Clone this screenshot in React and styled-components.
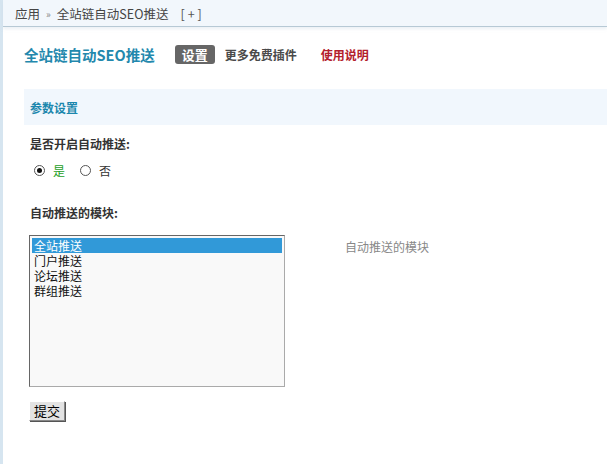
import React from 'react'
import styled, { createGlobalStyle } from 'styled-components'

const GlobalStyle = createGlobalStyle`
  html, body {
    margin: 0;
    padding: 0;
    background: #ffffff;
    font-family: "Noto Sans CJK SC", "Noto Sans", "Liberation Sans", sans-serif;
    font-size: 12px;
    color: #333;
  }
`

function App() {
  const modules = ['全站推送', '门户推送', '论坛推送', '群组推送']
  return (
    <Page>
      <GlobalStyle />
      <Crumbs>
        <span>应用</span>
        <Sep>»</Sep>
        <span>全站链自动SEO推送</span>
        <Plus>[+]</Plus>
      </Crumbs>
      <Main>
        <TitleRow>
          <Title>全站链自动SEO推送</Title>
          <Tab active>设置</Tab>
          <Tab>更多免费插件</Tab>
          <Tab red>使用说明</Tab>
        </TitleRow>
        <SectionHead>参数设置</SectionHead>
        <Form>
          <Label>是否开启自动推送:</Label>
          <RadioRow>
            <RadioItem>
              <Radio checked />
              <RadioText green>是</RadioText>
            </RadioItem>
            <RadioItem>
              <Radio />
              <RadioText>否</RadioText>
            </RadioItem>
          </RadioRow>
          <Label second>自动推送的模块:</Label>
          <FieldRow>
            <ListBox>
              {modules.map((m, i) => (
                <Option key={m} selected={i === 0}>{m}</Option>
              ))}
            </ListBox>
            <Hint>自动推送的模块</Hint>
          </FieldRow>
          <Submit>提交</Submit>
        </Form>
      </Main>
    </Page>
  )
}

export default App

const Page = styled.div`
  min-height: 464px;
  border-left: 3px solid #d6e5f0;
  box-sizing: border-box;
`

const Crumbs = styled.div`
  height: 27px;
  box-sizing: border-box;
  background: #f2f7fc;
  border-bottom: 1px solid #b7c9d5;
  display: flex;
  align-items: center;
  gap: 6px;
  padding-left: 12px;
  color: #444;
  font-size: 12.5px;
  box-shadow: 0 2px 3px rgba(200, 215, 225, 0.35);
`

const Sep = styled.span`
  color: #888;
  font-size: 10px;
`

const Plus = styled.span`
  margin-left: 6px;
  color: #555;
  letter-spacing: 3px;
`

const Main = styled.div`
  padding-left: 21px;
`

const TitleRow = styled.div`
  display: flex;
  align-items: center;
  height: 20px;
  margin-top: 17px;
`

const Title = styled.h1`
  margin: 0 20px 0 0;
  font-size: 14.5px;
  font-weight: bold;
  color: #2388ad;
`

const Tab = styled.span`
  font-weight: bold;
  color: ${p => (p.red ? '#b3202c' : p.active ? '#fff' : '#4a4a4a')};
  background: ${p => (p.active ? '#666' : 'transparent')};
  border-radius: 3px;
  padding: ${p => (p.active ? '1px 7px' : '0')};
  font-size: ${p => (p.active ? '13px' : '12px')};
  line-height: 17px;
  margin-right: ${p => (p.active ? '10px' : '24px')};
`

const SectionHead = styled.div`
  margin-top: 25px;
  height: 36px;
  background: #f1f7fd;
  display: flex;
  align-items: center;
  padding-left: 6px;
  font-size: 12px;
  font-weight: bold;
  color: #1c87ad;
`

const Form = styled.div`
  padding-left: 6px;
  display: flex;
  flex-direction: column;
`

const Label = styled.div`
  margin-top: ${p => (p.second ? '26px' : '11px')};
  font-size: 12px;
  font-weight: bold;
  color: #333;
  line-height: 16px;
`

const RadioRow = styled.div`
  display: flex;
  align-items: center;
  gap: 15px;
  margin-top: 10px;
  padding-left: 4px;
`

const RadioItem = styled.label`
  display: flex;
  align-items: center;
  gap: 8px;
`

const Radio = styled.span`
  width: 11px;
  height: 11px;
  border-radius: 50%;
  border: 1px solid #555;
  box-sizing: border-box;
  background: #fff;
  position: relative;
  &::after {
    content: '';
    display: ${p => (p.checked ? 'block' : 'none')};
    position: absolute;
    left: 2px;
    top: 2px;
    width: 5px;
    height: 5px;
    border-radius: 50%;
    background: #111;
  }
`

const RadioText = styled.span`
  font-size: 12px;
  color: ${p => (p.green ? '#1d9e1d' : '#333')};
`

const FieldRow = styled.div`
  display: flex;
  align-items: flex-start;
  margin-top: 14px;
  margin-left: -1px;
`

const ListBox = styled.div`
  width: 256px;
  height: 152px;
  box-sizing: border-box;
  border: 1px solid #aaa;
  border-top-color: #666;
  border-left-color: #666;
  background: #f9f9f9;
  padding: 2px;
  font-size: 12px;
  line-height: 15px;
  color: #111;
`

const Option = styled.div`
  height: 15px;
  padding-left: 2px;
  background: ${p => (p.selected ? '#3199d8' : 'transparent')};
  color: ${p => (p.selected ? '#fff' : '#111')};
`

const Hint = styled.div`
  margin-left: 60px;
  margin-top: 3px;
  color: #888;
  font-size: 12px;
`

const Submit = styled.button`
  align-self: flex-start;
  margin-top: 14px;
  margin-left: -1px;
  width: 36px;
  height: 20px;
  padding: 0;
  font-family: inherit;
  font-size: 13px;
  line-height: 16px;
  color: #000;
  background: #e3e3e3;
  border: 1px solid #888;
  border-top-color: #fff;
  border-left-color: #fff;
  box-shadow: 1px 1px 0 #555;
`
